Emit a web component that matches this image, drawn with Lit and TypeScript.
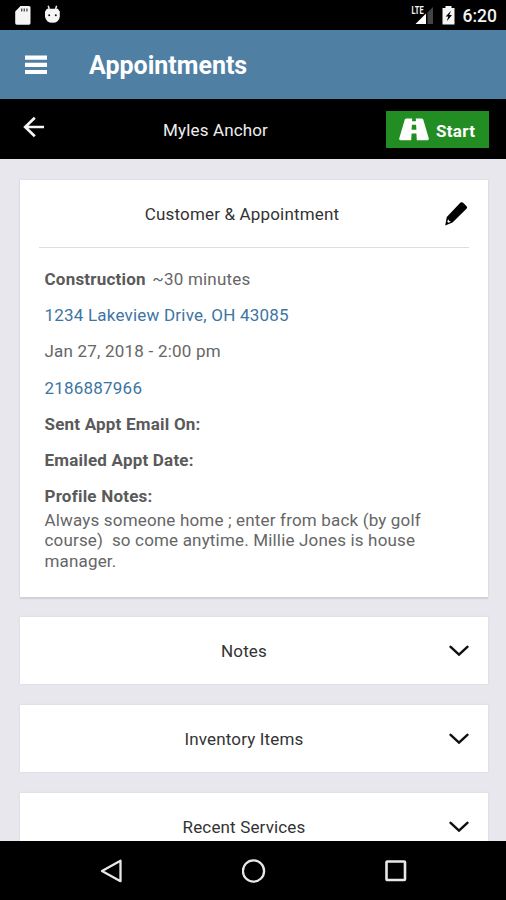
import { LitElement, html, css } from "lit";
import { customElement, property } from "lit/decorators.js";

const chevron = html`<svg class="chevron" width="20" height="12" viewBox="0 0 20 12">
  <path d="M1.6 1.8 L10 9.6 L18.4 1.8" fill="none" stroke="#111" stroke-width="2.5" stroke-linecap="round" /></svg>`;

@customElement("status-bar")
export class StatusBar extends LitElement {
  static styles = css`
    :host { display: flex; height: 30px; background: #000; color: #f2f2f2; box-sizing: border-box; padding: 0 9px 0 15px; }
    .side { display: flex; align-items: flex-start; }
    .space { flex: 1; }
    .sd { margin-top: 6px; }
    .droid { margin: 5px 0 0 13px; }
    .signal { margin-top: 5px; }
    .battery { margin: 6px 0 0 8px; }
    .time { font: 500 17.5px/32px Roboto, sans-serif; margin-left: 8px; }
    .lte { font: bold 10px Roboto, sans-serif; }
  `;
  render() {
    return html`
      <div class="side">
        <svg class="sd" width="16" height="19" viewBox="0 0 16 19">
          <path d="M5.5 0H14Q15.5 0 15.5 1.5V17Q15.5 18.7 14 18.7H1.8Q.2 18.7 .2 17V5.5Z" fill="#f5f5f5" />
          <path d="M6.7 2.5V5.5M9.3 2.5V5.5M11.9 2.5V5.5" stroke="#555" stroke-width="1.4" />
        </svg>
        <svg class="droid" width="17" height="19" viewBox="0 0 17 19">
          <path d="M4.2 .8L5.2 4M12.6 .8L11.6 4" stroke="#eee" stroke-width="1.5" />
          <path d="M3 3.8H13.8L15.8 6.5V11.5Q15 17.8 8.5 17.8Q2 17.8 1 11.5V6.5Z" fill="#f5f5f5" />
          <circle cx="5.2" cy="10.2" r="1" fill="#111" /><circle cx="11.8" cy="10.2" r="1" fill="#111" />
        </svg>
      </div>
      <div class="space"></div>
      <div class="side">
        <svg class="signal" width="24" height="20" viewBox="0 0 24 20">
          <path d="M17.5 7.5L23 2V19H17.5Z" fill="#444" />
          <path d="M5.5 19L16 8.5V19Z" fill="#fff" />
          <text class="lte" x="1.6" y="9.4" fill="#f5f5f5" textLength="12" lengthAdjust="spacingAndGlyphs">LTE</text>
        </svg>
        <svg class="battery" width="13" height="19" viewBox="0 0 13 19">
          <path d="M3.5 0H9.5V2H12.5V18.5H.5V2H3.5Z" fill="#f5f5f5" />
          <path d="M9 4.8L3.6 10.5H6.3L4.8 15.2L10 9H7.3Z" fill="#000" />
        </svg>
        <span class="time">6:20</span>
      </div>`;
  }
}

@customElement("fold-card")
export class FoldCard extends LitElement {
  @property() label = "";
  static styles = css`
    :host { display: grid; grid-template-columns: 1fr auto; align-items: center; height: 67px; flex: none;
      background: #fff; box-shadow: 0 0 2px #cfcfd6; font: 17px/24px Roboto, sans-serif; color: #333; padding-right: 19px; }
    .label { text-align: center; padding: 1px 0 0 20px; letter-spacing: .15px; }
    .chevron { display: block; }
  `;
  render() {
    return html`<span class="label">${this.label}</span>${chevron}`;
  }
}

@customElement("app-root")
export class AppRoot extends LitElement {
  static styles = css`
    :host { display: flex; flex-direction: column; height: 900px; width: 506px; overflow: hidden;
      background: #e8e7ed; font-family: Roboto, sans-serif; }
    svg { display: block; }
    .appbar { height: 69px; flex: none; background: #507fa4; display: flex; align-items: center; padding-left: 25px; }
    .title { color: #fff; font-size: 25px; font-weight: 700; line-height: 30px; margin: 2px 0 0 42px; }
    .subbar { height: 60px; flex: none; background: #000; display: grid; grid-template-columns: 22px 1fr 103px;
      align-items: center; padding: 0 17px 0 23px; box-sizing: border-box; }
    .back { margin-bottom: 4px; }
    .name { color: #eee; font-size: 17px; text-align: center; margin-top: 1px; padding-right: 0; letter-spacing: .13px; }
    .start { height: 37px; background: #228d22; color: #fff; display: flex; align-items: center; box-sizing: border-box;
      padding-left: 13px; font-size: 17px; font-weight: 700; gap: 7px; letter-spacing: .3px; }
    .start span { margin-top: 4px; }
    .main { flex: 1; min-height: 0; overflow: hidden; display: flex; flex-direction: column; gap: 21px; padding: 21px 18.5px 0 19.5px; }
    .card { height: 417px; flex: none; box-sizing: border-box; background: #fff; box-shadow: 0 0 2px #cfcfd6, 0 2px 1px #d3d2da;
      padding: 0 19px; margin-bottom: -1px; }
    .head { display: grid; grid-template-columns: 1fr 26px; align-items: center; height: 67px; border-bottom: 1px solid #dcdee2; }
    .heading { text-align: center; font-size: 17px; color: #333; padding: 1px 0 0 3px; letter-spacing: .16px; }
    .body { padding: 19px 6px 0; font-size: 17px; color: #666; letter-spacing: .21px; }
    .row { height: 24px; line-height: 24px; margin-bottom: 12.2px; white-space: pre; }
    .row.last { margin-bottom: 2px; }
    .link { color: #3d75a3; }
    .strong { font-weight: 700; color: #5a5a5a; }
    .row .duration { margin-left: 2px; }
    .notes { line-height: 20.2px; white-space: pre; letter-spacing: .17px; }
    .nav { height: 59px; flex: none; background: #000; display: flex; align-items: center; padding-left: 100px; }
    .home { margin-left: 118px; }
    .recent { margin-left: 118px; }
  `;
  render() {
    return html`
      <status-bar></status-bar>
      <div class="appbar">
        <svg width="22" height="20" viewBox="0 0 22 20"><path d="M0 2.6H22M0 9.8H22M0 17H22" stroke="#fff" stroke-width="4.2" /></svg>
        <span class="title">Appointments</span>
      </div>
      <div class="subbar">
        <svg class="back" width="22" height="22" viewBox="0 0 22 22">
          <path d="M11.8 1.7L2.2 11L11.8 20.3M2 11H21" fill="none" stroke="#f5f5f5" stroke-width="2.7" />
        </svg>
        <span class="name">Myles Anchor</span>
        <div class="start">
          <svg width="30" height="23" viewBox="0 0 30 23">
            <path fill="#fff" fill-rule="evenodd" d="M7.5 0.5H13.2L13 3.3H17L16.8 .5H22.5Q23.8 .5 24.3 1.8L29.8 20.5Q30.2 22.2 28.5 22.2H17.8L17.4 15.5H12.6L12.2 22.2H1.5Q-.2 22.2 .2 20.5L5.7 1.8Q6.2 .5 7.5 .5ZM12.9 6.8L12.6 11.8H17.4L17.1 6.8Z" />
          </svg>
          <span>Start</span>
        </div>
      </div>
      <div class="main">
        <div class="card">
          <div class="head">
            <span class="heading">Customer &amp; Appointment</span>
            <svg width="26" height="26" viewBox="0 0 26 26">
              <path d="M17.5 1.6Q19 .6 20.4 1.9L23.6 5.2Q24.8 6.6 23.5 7.8L9.5 21.6L2.2 24.4L3.8 16Z" fill="#000" />
              <path d="M5.2 18.2L6.2 19.9L8 20.5L5.6 21.8L4.2 20.8Z" fill="#fff" />
            </svg>
          </div>
          <div class="body">
            <div class="row"><span class="strong">Construction</span> <span class="duration">~30 minutes</span></div>
            <div class="row link">1234 Lakeview Drive, OH 43085</div>
            <div class="row">Jan 27, 2018 - 2:00 pm</div>
            <div class="row link">2186887966</div>
            <div class="row strong">Sent Appt Email On:</div>
            <div class="row strong">Emailed Appt Date:</div>
            <div class="row strong last">Profile Notes:</div>
            <div class="notes">Always someone home ; enter from back (by golf
course)  so come anytime. Millie Jones is house
manager.</div>
          </div>
        </div>
        <fold-card label="Notes"></fold-card>
        <fold-card label="Inventory Items"></fold-card>
        <fold-card label="Recent Services"></fold-card>
      </div>
      <div class="nav">
        <svg width="24" height="26" viewBox="0 0 24 26"><path d="M2 13L20.5 2.8V23.2Z" fill="none" stroke="#e8e8e8" stroke-width="2.3" stroke-linejoin="round" /></svg>
        <svg class="home" width="24" height="24" viewBox="0 0 24 24"><circle cx="11.5" cy="12" r="10.6" fill="none" stroke="#e8e8e8" stroke-width="2.3" /></svg>
        <svg class="recent" width="24" height="24" viewBox="0 0 24 24"><rect x="2.5" y="2.5" width="18.5" height="18.5" rx=".8" fill="none" stroke="#e8e8e8" stroke-width="2.6" /></svg>
      </div>`;
  }
}
